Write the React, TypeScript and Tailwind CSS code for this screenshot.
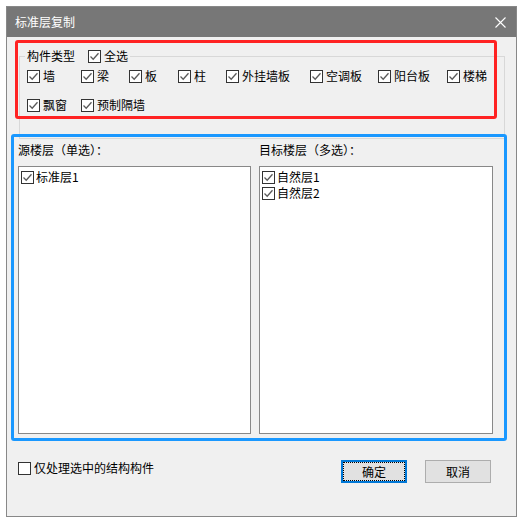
import React from "react";

const font = { fontFamily: '"Noto Sans CJK SC", "Microsoft YaHei", sans-serif' };

function Box({ checked = true }: { checked?: boolean }) {
  return (
    <span className="inline-flex w-[13px] h-[13px] shrink-0 border border-[#333] bg-white items-center justify-center">
      {checked && (
        <svg width="11" height="11" viewBox="0 0 11 11">
          <path d="M1.5 5.5 L4.2 8.2 L9.5 2.2" fill="none" stroke="#5a5a5a" strokeWidth="1.3" />
        </svg>
      )}
    </span>
  );
}

function Check({ label, w, checked = true }: { label: string; w?: string; checked?: boolean }) {
  return (
    <div className={`flex items-center gap-[3px] ${w ?? ""}`}>
      <Box checked={checked} />
      <span className="text-[12px] leading-[16px] text-black whitespace-nowrap">{label}</span>
    </div>
  );
}

function ListItem({ label }: { label: string }) {
  return (
    <div className="flex items-center gap-[2px] h-[16px]">
      <Box />
      <span className="text-[12px] leading-[16px] text-black whitespace-nowrap">{label}</span>
    </div>
  );
}

export default function App() {
  return (
    <div className="w-[523px] h-[523px] bg-white p-[6px]" style={font}>
      <div className="w-full h-full border border-[#888] flex flex-col">
        <div className="h-[30px] bg-[#777] flex items-center justify-between pl-[8px] pr-[10px] shrink-0">
          <span className="text-[12px] text-white leading-[16px]">标准层复制</span>
          <svg width="11" height="11" viewBox="0 0 11 11">
            <path d="M0.5 0.5 L10.5 10.5 M10.5 0.5 L0.5 10.5" stroke="#fff" strokeWidth="1.1" />
          </svg>
        </div>
        <div className="flex-1 bg-[#f0f0f0] relative flex flex-col">
          <fieldset className="ml-[12px] mt-[11px] w-[486px] border border-[#d8d8d8] pb-[25px]">
            <legend className="ml-[5px] px-[2px] flex items-center">
              <span className="text-[12px] leading-[16px] text-black mr-[13px]">构件类型</span>
              <Check label="全选" />
            </legend>
            <div className="flex items-center pl-[7px] mt-[4px] h-[16px]">
              <Check label="墙" w="w-[54px]" />
              <Check label="梁" w="w-[48px]" />
              <Check label="板" w="w-[49px]" />
              <Check label="柱" w="w-[48px]" />
              <Check label="外挂墙板" w="w-[84px]" />
              <Check label="空调板" w="w-[68px]" />
              <Check label="阳台板" w="w-[69px]" />
              <Check label="楼梯" />
            </div>
            <div className="flex items-center pl-[7px] mt-[13px] h-[16px]">
              <Check label="飘窗" w="w-[54px]" />
              <Check label="预制隔墙" />
            </div>
          </fieldset>

          <div className="flex gap-[8px] ml-[11px] mt-[3px]">
            <div className="flex flex-col w-[233px]">
              <div className="text-[12px] leading-[16px] text-black h-[16px]">源楼层（单选）：</div>
              <div className="mt-[8px] h-[268px] border border-[#888] bg-white pl-[2px] pt-[2px]">
                <ListItem label="标准层1" />
              </div>
            </div>
            <div className="flex flex-col w-[234px]">
              <div className="text-[12px] leading-[16px] text-black h-[16px]">目标楼层（多选）：</div>
              <div className="mt-[8px] h-[268px] border border-[#888] bg-white pl-[2px] pt-[2px]">
                <ListItem label="自然层1" />
                <ListItem label="自然层2" />
              </div>
            </div>
          </div>

          <div className="flex items-start ml-[11px] mr-[25px] mt-[26px]">
            <div>
              <Check label="仅处理选中的结构构件" checked={false} />
            </div>
            <div className="ml-auto flex gap-[18px]">
              <button className="w-[66px] h-[23px] border-2 border-[#0078d7] bg-[#e1e1e1] p-0 flex">
                <span className="flex-1 border border-dotted border-black flex items-center justify-center text-[12px] text-black leading-[16px]">
                  确定
                </span>
              </button>
              <button className="w-[66px] h-[23px] border border-[#adadad] bg-[#e1e1e1] flex items-center justify-center text-[12px] text-black leading-[16px]">
                取消
              </button>
            </div>
          </div>

          <div className="absolute left-[8px] top-[3px] w-[482px] h-[79px] border-[3px] border-[#ff2222] rounded-[3px] pointer-events-none" />
          <div className="absolute left-[4px] top-[97px] w-[496px] h-[307px] border-[3px] border-[#1a98ff] rounded-[3px] pointer-events-none" />
        </div>
      </div>
    </div>
  );
}
